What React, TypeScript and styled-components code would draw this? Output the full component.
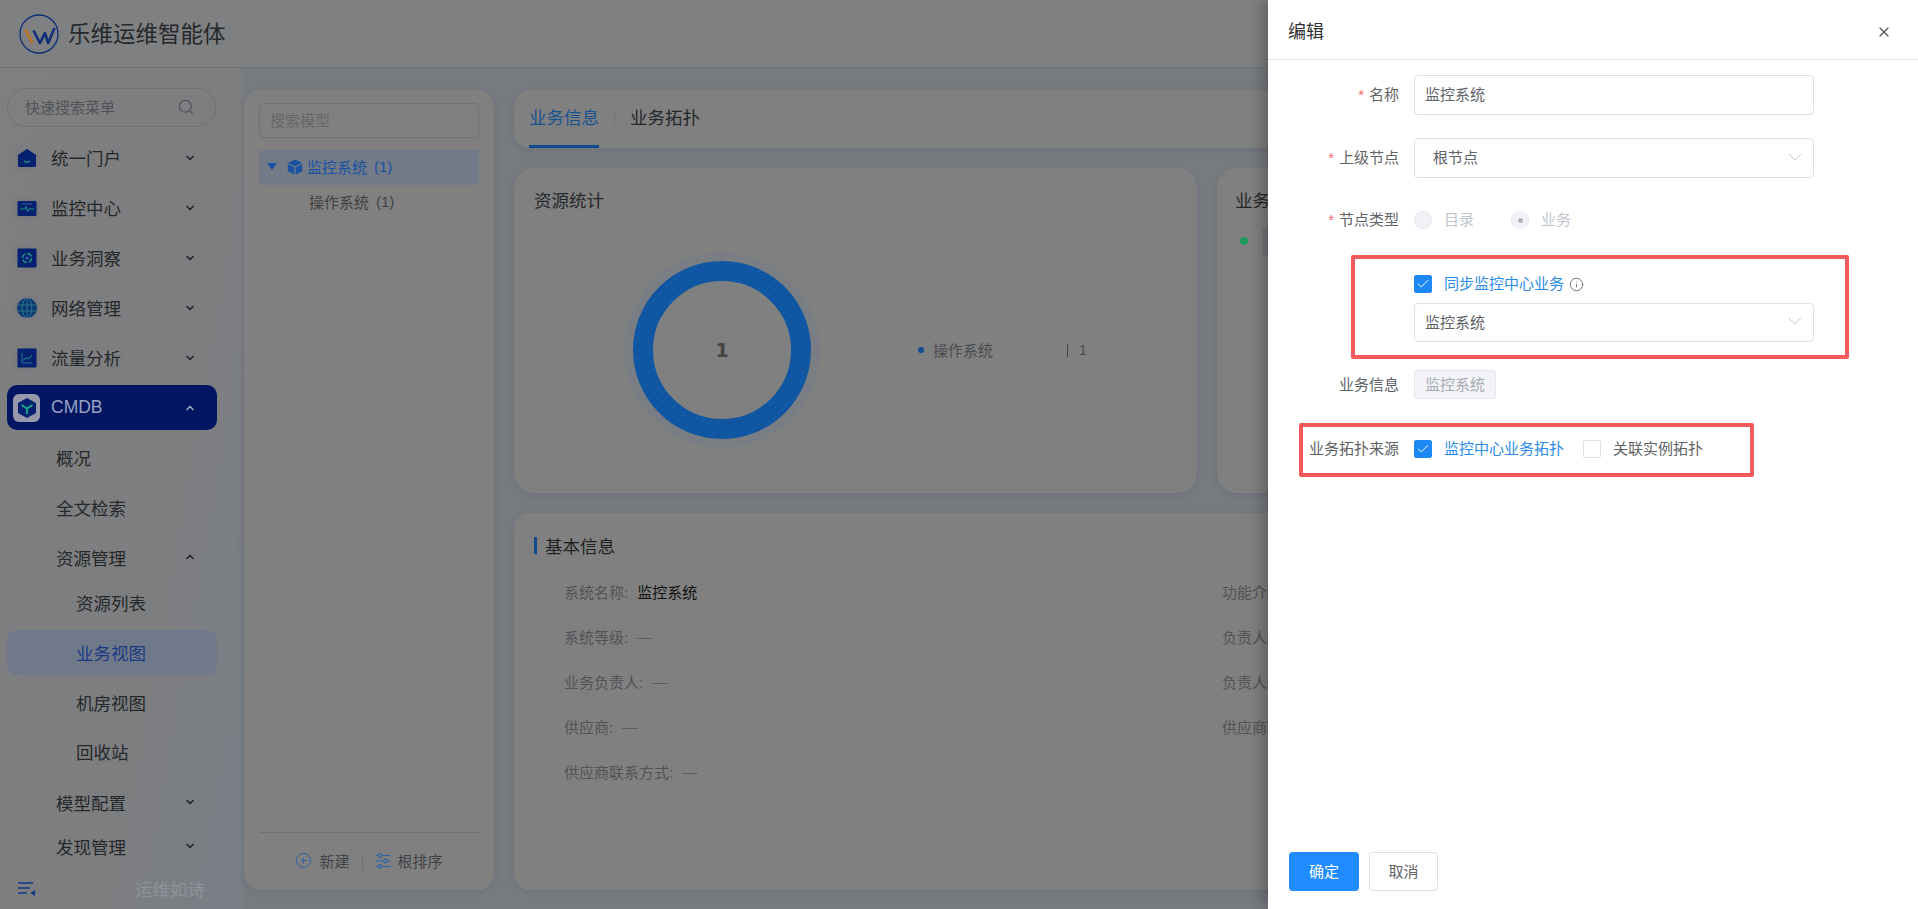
import React from "react";
import styled, { createGlobalStyle } from "styled-components";
import { ChevronDown, ChevronUp, CirclePlus, Search, X, Info, Check } from "lucide-react";

const FONT = `"Liberation Sans", "Noto Sans CJK SC", sans-serif`;

const GlobalStyle = createGlobalStyle`
  html, body { margin: 0; padding: 0; height: 100%; overflow: hidden; }
  body { font-family: ${FONT}; }
  * { box-sizing: border-box; }
`;

const App = () => {
  return (
    <Page>
      <GlobalStyle />
      <Header>
        <Logo />
        <Brand>乐维运维智能体</Brand>
      </Header>
      <Body>
        <Sidebar>
          <SearchPill>
            <span>快速搜索菜单</span>
            <Search size={18} color="#4a4d52" strokeWidth={1.4} />
          </SearchPill>
          <MenuList>
            {topMenu.map((m) => (
              <MenuRow key={m.label}>
                <IconSlot>{m.icon}</IconSlot>
                <MenuLabel>{m.label}</MenuLabel>
                <ChevronDown size={12} strokeWidth={3.5} color="#25282b" />
              </MenuRow>
            ))}
            <CmdbRow>
              <CmdbTile>
                <CubeIcon />
              </CmdbTile>
              <CmdbLabel>CMDB</CmdbLabel>
              <ChevronUp size={12} strokeWidth={3.5} color="#9aa4c2" />
            </CmdbRow>
            <SubRow $h={50}>概况</SubRow>
            <SubRow $h={50}>全文检索</SubRow>
            <SubRow $h={50}>
              <span>资源管理</span>
              <ChevronUp size={12} strokeWidth={3.5} color="#25282b" />
            </SubRow>
            <LeafRow $h={42} $pb={4}>资源列表</LeafRow>
            <LeafRow $h={45} $active $mt={5} $pb={1}>业务视图</LeafRow>
            <LeafRow $h={50} $mt={3} $pb={2}>机房视图</LeafRow>
            <LeafRow $h={50} $pb={3}>回收站</LeafRow>
            <SubRow $h={50}>
              <span>模型配置</span>
              <ChevronDown size={12} strokeWidth={3.5} color="#25282b" />
            </SubRow>
            <SubRow $h={38}>
              <span>发现管理</span>
              <ChevronDown size={12} strokeWidth={3.5} color="#25282b" />
            </SubRow>
          </MenuList>
          <SideFooter>
            <CollapseIcon />
            <Slogan>运维如诗</Slogan>
          </SideFooter>
        </Sidebar>

        <TreePanel>
          <ModelSearch>搜索模型</ModelSearch>
          <TreeRow $selected>
            <Caret />
            <TreeCube />
            <span>监控系统</span>
            <Count>(1)</Count>
          </TreeRow>
          <TreeRow>
            <span>操作系统</span>
            <Count>(1)</Count>
          </TreeRow>
          <TreeFooter>
            <TreeAction>
              <CirclePlus size={17} color="#2b62a8" strokeWidth={1.4} />
              <span>新建</span>
            </TreeAction>
            <ActionDivider />
            <TreeAction>
              <SlidersIcon />
              <span>根排序</span>
            </TreeAction>
          </TreeFooter>
        </TreePanel>

        <Content>
          <TabBar>
            <Tab $active>业务信息</Tab>
            <TabDivider />
            <Tab>业务拓扑</Tab>
          </TabBar>
          <CardRow>
            <Card>
              <CardTitle>资源统计</CardTitle>
              <StatsBody>
                <Donut />
                <Legend>
                  <LegendDot />
                  <LegendName>操作系统</LegendName>
                  <LegendBar />
                  <LegendValue>1</LegendValue>
                </Legend>
              </StatsBody>
            </Card>
            <Card>
              <CardTitle $x={18}>业务状态</CardTitle>
              <StatusRow>
                <StatusDot />
                <StatusBlock />
              </StatusRow>
            </Card>
          </CardRow>
          <InfoCard>
            <InfoTitle>基本信息</InfoTitle>
            <InfoGrid>
              {infoRows.map((r) => (
                <InfoRow key={r.k}>
                  <InfoKey>{r.k}:</InfoKey>
                  <InfoValue $strong={r.v !== "—"}>{r.v}</InfoValue>
                </InfoRow>
              ))}
            </InfoGrid>
          </InfoCard>
        </Content>
      </Body>

      <Drawer>
        <DrawerHeader>
          <DrawerTitle>编辑</DrawerTitle>
          <X size={16} color="#555" strokeWidth={1.8} />
        </DrawerHeader>
        <DrawerBody>
          <FormRow $h={40} $mt={15}>
            <FieldLabel $required>名称</FieldLabel>
            <TextBox>监控系统</TextBox>
          </FormRow>
          <FormRow $h={40} $mt={23}>
            <FieldLabel $required>上级节点</FieldLabel>
            <SelectBox $inset={18}>
              <span>根节点</span>
              <SelectArrow />
            </SelectBox>
          </FormRow>
          <FormRow $h={40} $mt={22}>
            <FieldLabel $required>节点类型</FieldLabel>
            <RadioDot />
            <RadioText>目录</RadioText>
            <RadioDot $on />
            <RadioText>业务</RadioText>
          </FormRow>
          <FormRow $h={18} $mt={35}>
            <FieldLabel />
            <CheckBox $on>
              <Check size={14} color="#fff" strokeWidth={1.6} />
            </CheckBox>
            <CheckText $on>同步监控中心业务</CheckText>
            <Info size={15} color="#666" strokeWidth={1.4} />
          </FormRow>
          <FormRow $h={39} $mt={10}>
            <FieldLabel />
            <SelectBox $inset={10}>
              <span>监控系统</span>
              <SelectArrow />
            </SelectBox>
          </FormRow>
          <FormRow $h={29} $mt={28}>
            <FieldLabel>业务信息</FieldLabel>
            <DisabledTag>监控系统</DisabledTag>
          </FormRow>
          <FormRow $h={18} $mt={41}>
            <FieldLabel>业务拓扑来源</FieldLabel>
            <CheckBox $on>
              <Check size={14} color="#fff" strokeWidth={1.6} />
            </CheckBox>
            <CheckText $on>监控中心业务拓扑</CheckText>
            <CheckBox />
            <CheckText>关联实例拓扑</CheckText>
          </FormRow>
          <DrawerFooter>
            <PrimaryButton>确定</PrimaryButton>
            <PlainButton>取消</PlainButton>
          </DrawerFooter>
        </DrawerBody>
        <Mark $left={83} $top={255} $w={498} $h={104} />
        <Mark $left={31} $top={423} $w={455} $h={54} />
      </Drawer>
    </Page>
  );
};

export default App;

/* icons */
const Logo = () => (
  <svg width="42" height="42" viewBox="0 0 42 42" fill="none">
    <circle cx="21" cy="21" r="19" stroke="#0f2f78" strokeWidth="1.3" />
    <path d="M7.5 16.5 L14.5 30" stroke="#b8702c" strokeWidth="2.8" />
    <path d="M15.5 17.5 L22 30 L26.9 20 L30.2 30 L36.5 15" stroke="#0f2f78" strokeWidth="2.6" strokeLinejoin="round" />
  </svg>
);

const HomeIcon = () => (
  <svg width="20" height="20" viewBox="0 0 20 20">
    <path d="M10 1 L19 7 V18 a1 1 0 0 1 -1 1 H2 a1 1 0 0 1 -1 -1 V7 Z" fill="#05206e" />
    <path d="M7 13 Q10 15.5 13 13" stroke="#1f9c8c" strokeWidth="1.3" fill="none" />
  </svg>
);

const MonitorIcon = () => (
  <svg width="20" height="20" viewBox="0 0 20 20">
    <rect x="0.5" y="3" width="19" height="15" rx="1" fill="#05206e" />
    <path d="M3 11 H8 L9 8.5 L10.5 13.5 L11.8 11 H17" stroke="#1f9c8c" strokeWidth="0.9" fill="none" />
    <path d="M5 6 H15" stroke="#3f6aa8" strokeWidth="0.8" />
  </svg>
);

const InsightIcon = () => (
  <svg width="20" height="20" viewBox="0 0 20 20">
    <rect x="0.5" y="0.5" width="19" height="19" rx="1" fill="#05206e" />
    <circle cx="10" cy="10" r="4.5" stroke="#1f9c8c" strokeWidth="1.3" strokeDasharray="5 2" fill="none" />
    <circle cx="10" cy="10" r="1.5" fill="#2a6a9c" />
  </svg>
);

const GlobeIcon = () => (
  <svg width="20" height="20" viewBox="0 0 20 20">
    <circle cx="10" cy="10" r="10" fill="#0c3a70" />
    <path d="M0.5 7 H19.5 M0.5 13 H19.5 M10 0 V20" stroke="#2d8090" strokeWidth="0.8" />
    <ellipse cx="10" cy="10" rx="4.8" ry="10" stroke="#2d8090" strokeWidth="0.8" fill="none" />
  </svg>
);

const TrendIcon = () => (
  <svg width="20" height="20" viewBox="0 0 20 20">
    <rect x="0.5" y="0.5" width="19" height="19" rx="1" fill="#05206e" />
    <path d="M5 5 V15 H15" stroke="#2f7fa0" strokeWidth="0.9" fill="none" />
    <path d="M6 12.5 L9 9.5 L11 11 L15 7.5" stroke="#1f9c8c" strokeWidth="1" fill="none" />
  </svg>
);

const CubeIcon = () => (
  <svg width="22" height="22" viewBox="0 0 22 22">
    <path d="M11 1 L20 6 V16 L11 21 L2 16 V6 Z" fill="#05206e" />
    <path d="M11 11.5 V17 M11 11.5 L5.5 8 M11 11.5 L16.5 8" stroke="#17b08c" strokeWidth="1.8" fill="none" />
  </svg>
);

const CollapseIcon = () => (
  <svg width="18" height="16" viewBox="0 0 18 16">
    <path d="M0 2 H15 M0 7 H12 M0 12 H9" stroke="#12378a" strokeWidth="1.6" />
    <path d="M17 9 V15 L12.5 12 Z" fill="#12378a" />
  </svg>
);

const Caret = () => (
  <svg width="10" height="8" viewBox="0 0 10 8">
    <path d="M0 0 H10 L5 7 Z" fill="#1a529f" />
  </svg>
);

const TreeCube = () => (
  <svg width="16" height="16" viewBox="0 0 16 16">
    <path d="M8 0.5 L15 4 L8 7.2 L1 4 Z" fill="#1a529f" />
    <path d="M0.8 5 L7.4 8.2 V15.5 L0.8 12.2 Z" fill="#1a529f" />
    <path d="M15.2 5 L8.6 8.2 V15.5 L15.2 12.2 Z" fill="#1a529f" />
  </svg>
);

const SlidersIcon = () => (
  <svg width="16" height="16" viewBox="0 0 16 16" fill="none" stroke="#2b62a8" strokeWidth="1.2">
    <path d="M0.5 2.5 H3 M7 2.5 H15.5 M0.5 8 H8.5 M12.5 8 H15.5 M0.5 13.5 H3 M7 13.5 H15.5" />
    <circle cx="5" cy="2.5" r="1.8" />
    <circle cx="10.5" cy="8" r="1.8" />
    <circle cx="5" cy="13.5" r="1.8" />
  </svg>
);

const SelectArrow = () => <ChevronDown size={24} color="#c0c4cc" strokeWidth={0.9} />;

const Donut = () => (
  <DonutBox>
    <svg width="196" height="196" viewBox="0 0 196 196">
      <defs>
        <pattern id="hatch" width="6" height="6" patternUnits="userSpaceOnUse" patternTransform="rotate(-45)">
          <rect width="6" height="6" fill="#0f559f" />
          <rect width="6" height="2" fill="#125aa7" />
        </pattern>
      </defs>
      <circle cx="98" cy="98" r="93" fill="none" stroke="#797d84" strokeWidth="9" />
      <circle cx="98" cy="98" r="79" fill="none" stroke="url(#hatch)" strokeWidth="20" />
    </svg>
    <DonutNumber>1</DonutNumber>
  </DonutBox>
);

const topMenu = [
  { label: "统一门户", icon: <HomeIcon /> },
  { label: "监控中心", icon: <MonitorIcon /> },
  { label: "业务洞察", icon: <InsightIcon /> },
  { label: "网络管理", icon: <GlobeIcon /> },
  { label: "流量分析", icon: <TrendIcon /> },
];

const infoRows = [
  { k: "系统名称", v: "监控系统" },
  { k: "功能介绍", v: "—" },
  { k: "系统等级", v: "—" },
  { k: "负责人邮箱", v: "—" },
  { k: "业务负责人", v: "—" },
  { k: "负责人联系方式", v: "—" },
  { k: "供应商", v: "—" },
  { k: "供应商联系人", v: "—" },
  { k: "供应商联系方式", v: "—" },
];

/* page */
const Page = styled.div`
  position: relative;
  width: 1918px;
  height: 909px;
  overflow: hidden;
  background: #787c81;
`;

const Header = styled.div`
  display: flex;
  align-items: center;
  gap: 8px;
  height: 68px;
  padding-left: 18px;
  background: #7e8082;
  border-bottom: 1px solid #6e7276;
`;

const Brand = styled.div`
  padding-bottom: 4px;
  font-size: 22.5px;
  color: #26282b;
`;

const Body = styled.div`
  display: flex;
  height: 841px;
`;

/* sidebar */
const Sidebar = styled.div`
  display: flex;
  flex-direction: column;
  width: 243px;
  flex-shrink: 0;
  padding: 20px 0 0 7px;
  background: linear-gradient(100deg, #7f7f80 0%, #7d7e80 65%, #797f87 100%);
`;

const SearchPill = styled.div`
  display: flex;
  align-items: center;
  justify-content: space-between;
  width: 209px;
  height: 39px;
  padding: 0 20px 2px 17px;
  border: 1px solid #6f7175;
  border-radius: 20px;
  font-size: 15px;
  color: #505357;
`;

const MenuList = styled.div`
  display: flex;
  flex-direction: column;
  width: 210px;
  margin-top: 6px;
`;

const MenuRow = styled.div`
  display: flex;
  align-items: center;
  height: 50px;
  padding: 0 21px 0 10px;
`;

const IconSlot = styled.div`
  display: flex;
  width: 20px;
  height: 20px;
  flex-shrink: 0;
  filter: drop-shadow(0 0 3px rgba(60, 70, 120, 0.25));
`;

const MenuLabel = styled.div`
  flex: 1;
  margin-left: 14px;
  padding-bottom: 2px;
  font-size: 17.5px;
  color: #25282b;
`;

const CmdbRow = styled.div`
  display: flex;
  align-items: center;
  height: 45px;
  margin: 2px 0 3px;
  padding: 0 21px 0 6px;
  border-radius: 10px;
  background: #021560;
`;

const CmdbTile = styled.div`
  display: flex;
  align-items: center;
  justify-content: center;
  width: 27px;
  height: 28px;
  border-radius: 6px;
  background: #9599aa;
`;

const CmdbLabel = styled.div`
  flex: 1;
  margin-left: 11px;
  font-size: 17.5px;
  color: #97a2c4;
`;

const SubRow = styled.div<{ $h: number }>`
  display: flex;
  align-items: center;
  justify-content: space-between;
  height: ${({ $h }) => $h}px;
  padding: 0 21px 2px 49px;
  font-size: 17.5px;
  color: #25282b;
`;

const LeafRow = styled.div<{ $h: number; $active?: boolean; $mt?: number; $pb: number }>`
  display: flex;
  align-items: center;
  height: ${({ $h }) => $h}px;
  margin-top: ${({ $mt }) => $mt || 0}px;
  padding: 0 0 ${({ $pb }) => $pb}px 69px;
  border-radius: 10px;
  font-size: 17.5px;
  color: ${({ $active }) => ($active ? "#1a3a84" : "#25282b")};
  background: ${({ $active }) => ($active ? "#707989" : "transparent")};
`;

const SideFooter = styled.div`
  display: flex;
  align-items: center;
  justify-content: space-between;
  width: 198px;
  height: 40px;
  margin-top: auto;
  padding-left: 11px;
`;

const Slogan = styled.div`
  padding-bottom: 2px;
  font-size: 17.5px;
  color: #8e929a;
`;

/* tree panel */
const TreePanel = styled.div`
  position: relative;
  display: flex;
  flex-direction: column;
  width: 250px;
  height: 800px;
  margin: 22px 0 0 1px;
  flex-shrink: 0;
  padding: 13px 15px 0;
  border-radius: 16px;
  background: #808080;
  box-shadow: 0 2px 10px rgba(70, 80, 100, 0.25);
`;

const ModelSearch = styled.div`
  display: flex;
  align-items: center;
  height: 35px;
  margin-bottom: 12px;
  padding: 0 0 2px 10px;
  border: 1px solid #6f7276;
  border-radius: 4px;
  font-size: 15px;
  color: #64676b;
`;

const TreeRow = styled.div<{ $selected?: boolean }>`
  display: flex;
  align-items: center;
  height: 35px;
  padding: 0 0 2px ${({ $selected }) => ($selected ? "8px" : "50px")};
  font-size: 15px;
  color: ${({ $selected }) => ($selected ? "#1a529f" : "#404244")};
  background: ${({ $selected }) => ($selected ? "#727b87" : "transparent")};

  & > svg:first-child {
    margin-right: 10px;
  }

  & > svg + svg {
    margin-right: 4px;
  }
`;

const Count = styled.span`
  margin-left: 7px;
`;

const TreeFooter = styled.div`
  position: absolute;
  left: 15px;
  right: 15px;
  bottom: 0;
  display: flex;
  align-items: center;
  justify-content: center;
  height: 58px;
  border-top: 1px solid #6f7174;
`;

const TreeAction = styled.div`
  display: flex;
  align-items: center;
  gap: 7px;
  padding-bottom: 2px;
  font-size: 15px;
  color: #414346;

  & > span {
    padding-bottom: 1px;
  }
`;

const ActionDivider = styled.div`
  width: 1px;
  height: 16px;
  margin: 0 12px;
  background: #6f7174;
`;

/* content */
const Content = styled.div`
  display: flex;
  flex-direction: column;
  gap: 20px;
  width: 1384px;
  margin: 22px 0 0 20px;
  flex-shrink: 0;
`;

const TabBar = styled.div`
  display: flex;
  align-items: center;
  height: 58px;
  padding-left: 15px;
  border-radius: 16px;
  background: #808080;
  box-shadow: 0 2px 10px rgba(70, 80, 100, 0.25);
`;

const Tab = styled.div<{ $active?: boolean }>`
  display: flex;
  align-items: center;
  height: 58px;
  padding-bottom: 2px;
  font-size: 17.5px;
  color: ${({ $active }) => ($active ? "#17518f" : "#25282b")};
  border-bottom: 3px solid ${({ $active }) => ($active ? "#124c8e" : "transparent")};
`;

const TabDivider = styled.div`
  width: 1px;
  height: 14px;
  margin: 0 15px;
  background: #727477;
`;

const CardRow = styled.div`
  display: grid;
  grid-template-columns: 683px 681px;
  gap: 20px;
`;

const Card = styled.div`
  height: 325px;
  border-radius: 20px;
  background: #808080;
  box-shadow: 0 2px 10px rgba(70, 80, 100, 0.25);
`;

const CardTitle = styled.div<{ $x?: number }>`
  padding: 21px 0 0 ${({ $x }) => $x || 20}px;
  font-size: 17.5px;
  line-height: 24px;
  color: #25282b;
`;

const StatsBody = styled.div`
  display: flex;
  align-items: center;
  margin: 39px 0 0 110px;
`;

const DonutBox = styled.div`
  position: relative;
  width: 196px;
  height: 196px;
`;

const DonutNumber = styled.div`
  position: absolute;
  inset: 0;
  display: flex;
  align-items: center;
  justify-content: center;
  font-family: "DejaVu Sans", sans-serif;
  font-size: 19px;
  font-weight: 700;
  color: #444;
`;

const Legend = styled.div`
  display: flex;
  align-items: center;
  margin-left: 98px;
`;

const LegendDot = styled.div`
  width: 6px;
  height: 6px;
  border-radius: 50%;
  background: #124c8e;
`;

const LegendName = styled.div`
  width: 134px;
  margin-left: 9px;
  padding-bottom: 2px;
  font-size: 15px;
  color: #4a4c4f;
`;

const LegendBar = styled.div`
  width: 1px;
  height: 13px;
  background: #444;
`;

const LegendValue = styled.div`
  margin-left: 11px;
  font-size: 14px;
  color: #4a4c4f;
`;

const StatusRow = styled.div`
  display: flex;
  align-items: center;
  gap: 14px;
  margin: 13px 0 0 23px;
`;

const StatusDot = styled.div`
  width: 8px;
  height: 8px;
  border-radius: 50%;
  background: #1f9a5c;
`;

const StatusBlock = styled.div`
  width: 200px;
  height: 30px;
  border-radius: 4px;
  background: #74777c;
`;

const InfoCard = styled.div`
  height: 377px;
  padding: 19px 20px 0;
  border-radius: 16px;
  background: #808080;
  box-shadow: 0 2px 10px rgba(70, 80, 100, 0.25);
`;

const InfoTitle = styled.div`
  display: flex;
  align-items: center;
  height: 26px;
  font-size: 17.5px;
  color: #1e2022;

  &::before {
    content: "";
    width: 3px;
    height: 17px;
    margin-right: 8px;
    background: #124c8e;
  }
`;

const InfoGrid = styled.div`
  display: grid;
  grid-template-columns: 658px 1fr;
  grid-auto-rows: 45px;
  margin: 12px 0 0 30px;
`;

const InfoRow = styled.div`
  display: flex;
  align-items: center;
  gap: 9px;
  height: 45px;
  padding-bottom: 3px;
  font-size: 15px;
`;

const InfoKey = styled.span`
  color: #515356;
`;

const InfoValue = styled.span<{ $strong: boolean }>`
  color: ${({ $strong }) => ($strong ? "#111" : "#5c5e60")};
`;

/* drawer */
const Drawer = styled.div`
  position: absolute;
  top: 0;
  right: 0;
  bottom: 0;
  display: flex;
  flex-direction: column;
  width: 650px;
  background: #fff;
  box-shadow: -6px 0 14px rgba(0, 0, 0, 0.25);
`;

const DrawerHeader = styled.div`
  display: flex;
  align-items: center;
  justify-content: space-between;
  height: 60px;
  padding: 4px 26px 0 20px;
  border-bottom: 1px solid #e6e6e6;
`;

const DrawerTitle = styled.div`
  padding-bottom: 3px;
  font-size: 18px;
  color: #303133;
`;

const DrawerBody = styled.div`
  display: flex;
  flex: 1;
  flex-direction: column;
`;

const FormRow = styled.div<{ $h: number; $mt: number }>`
  display: flex;
  align-items: center;
  height: ${({ $h }) => $h}px;
  margin-top: ${({ $mt }) => $mt}px;
`;

const FieldLabel = styled.div<{ $required?: boolean }>`
  width: 131px;
  margin-right: 15px;
  padding-bottom: 3px;
  flex-shrink: 0;
  text-align: right;
  font-size: 15px;
  color: #606266;

  &::before {
    content: ${({ $required }) => ($required ? '"*"' : "none")};
    margin-right: 5px;
    color: #f56c6c;
  }
`;

const TextBox = styled.div`
  display: flex;
  align-items: center;
  width: 400px;
  height: 40px;
  padding: 0 0 3px 10px;
  border: 1px solid #dcdfe6;
  border-radius: 4px;
  font-size: 15px;
  color: #606266;
`;

const SelectBox = styled.div<{ $inset: number }>`
  display: flex;
  align-items: center;
  justify-content: space-between;
  width: 400px;
  height: 100%;
  padding: 0 6px 3px ${({ $inset }) => $inset}px;
  border: 1px solid #dcdfe6;
  border-radius: 4px;
  font-size: 15px;
  color: #606266;
`;

const RadioDot = styled.div<{ $on?: boolean }>`
  display: flex;
  align-items: center;
  justify-content: center;
  width: 18px;
  height: 18px;
  border: 1px solid #e4e7ed;
  border-radius: 50%;
  background: #f0f2f7;

  &::after {
    content: "";
    width: 5px;
    height: 5px;
    border-radius: 50%;
    background: ${({ $on }) => ($on ? "#b0b3b8" : "transparent")};
  }
`;

const RadioText = styled.div`
  width: 67px;
  margin-left: 12px;
  padding-bottom: 3px;
  font-size: 15px;
  color: #c0c4cc;
`;

const CheckBox = styled.div<{ $on?: boolean }>`
  display: flex;
  align-items: center;
  justify-content: center;
  width: 18px;
  height: 18px;
  border: 1px solid ${({ $on }) => ($on ? "#1e88f5" : "#dcdfe6")};
  border-radius: 2px;
  background: ${({ $on }) => ($on ? "#1e88f5" : "#fff")};
`;

const CheckText = styled.div<{ $on?: boolean }>`
  margin: 0 ${({ $on }) => ($on ? "5px" : "0")} 0 12px;
  min-width: 120px;
  padding-bottom: 3px;
  font-size: 15px;
  color: ${({ $on }) => ($on ? "#2a8ce8" : "#606266")};

  & + div {
    margin-left: 14px;
  }
`;

const DisabledTag = styled.div`
  display: flex;
  align-items: center;
  height: 29px;
  padding: 0 10px 3px;
  border: 1px solid #e4e7ed;
  border-radius: 3px;
  background: #f2f4f7;
  font-size: 15px;
  color: #a8abb2;
`;

const DrawerFooter = styled.div`
  display: flex;
  gap: 10px;
  margin-top: auto;
  padding: 0 0 18px 21px;
`;

const PrimaryButton = styled.div`
  display: flex;
  align-items: center;
  justify-content: center;
  width: 70px;
  height: 39px;
  padding-bottom: 2px;
  border-radius: 4px;
  background: #1f8bff;
  font-size: 15px;
  color: #fff;
`;

const PlainButton = styled.div`
  display: flex;
  align-items: center;
  justify-content: center;
  width: 69px;
  height: 39px;
  padding-bottom: 2px;
  border: 1px solid #dcdfe6;
  border-radius: 4px;
  background: #fff;
  font-size: 15px;
  color: #606266;
`;

const Mark = styled.div<{ $left: number; $top: number; $w: number; $h: number }>`
  position: absolute;
  left: ${({ $left }) => $left}px;
  top: ${({ $top }) => $top}px;
  width: ${({ $w }) => $w}px;
  height: ${({ $h }) => $h}px;
  border: 4px solid #f55a5a;
  border-radius: 2px;
  pointer-events: none;
`;
